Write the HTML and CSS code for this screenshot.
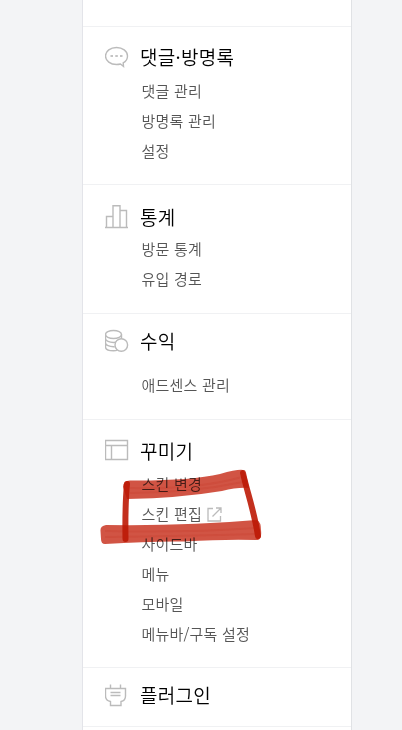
FILE: index.html
```
<!DOCTYPE html>
<html lang="ko">
<head>
    <meta charset="UTF-8">
    <meta name="viewport" content="width=device-width, initial-scale=1.0">
    <title>블로그 관리</title>
    <link rel="stylesheet" href="styles.css">
</head>
<body>
    <nav class="sidebar">
        <div class="menu-top"></div>

        <!-- Comments -->
        <section class="menu menu-comment">
            <h2>
                <svg class="icon" width="24" height="24" viewBox="0 0 24 24">
                    <path d="M11.500 2.500C5.500 2.500.5 6 .5 11s5 8.500 11 8.500q2.200 0 4-.5l3 2.500-.3-3.700C21 16.500 22.500 14 22.500 11c0-5-5-8.500-11-8.500z"/>
                    <path class="dots" d="M5.500 11h2.500M10.300 11h2.500M15 11h2.500"/>
                </svg>
                <span>댓글·방명록</span>
            </h2>
            <ul>
                <li>댓글 관리</li>
                <li>방명록 관리</li>
                <li>설정</li>
            </ul>
        </section>

        <!-- Statistics -->
        <section class="menu menu-stats">
            <h2>
                <svg class="icon" width="24" height="24" viewBox="0 0 24 24">
                    <path d="M0 22.500h23M1.500 22V11.500H8M8 22V.8h7V22M15 5.500h6.500V22"/>
                </svg>
                <span>통계</span>
            </h2>
            <ul>
                <li>방문 통계</li>
                <li>유입 경로</li>
            </ul>
        </section>

        <!-- Revenue -->
        <section class="menu menu-revenue">
            <h2>
                <svg class="icon" width="24" height="24" viewBox="0 0 24 24">
                    <ellipse cx="8.500" cy="5.500" rx="8" ry="4"/>
                    <path d="M.5 5.500v12.500c0 2.500 4 3.800 8 3.800 1.500 0 3-.2 4-.6M16.500 5.500v4M.5 9.500c0 2.500 4 4 8 4 4.500 0 8-1.500 8-4M.5 13.800c0 2.500 4 4 8 4h1.200"/>
                    <circle cx="16.300" cy="16" r="6.300"/>
                </svg>
                <span>수익</span>
            </h2>
            <ul>
                <li>애드센스 관리</li>
            </ul>
        </section>

        <!-- Design -->
        <section class="menu menu-design">
            <h2>
                <svg class="icon" width="24" height="24" viewBox="0 0 24 24">
                    <path d="M.5 1.500h22v19H.5zM.5 6.500h22M6.500 6.500v14"/>
                </svg>
                <span>꾸미기</span>
            </h2>
            <ul>
                <li>스킨 변경</li>
                <li>스킨 편집
                    <svg class="icon-link" width="15" height="15" viewBox="0 0 15 15">
                        <path d="M6 1.500H1v12.500h12.500V9M9 1h5v5M14 1L5.500 9.500"/>
                    </svg>
                </li>
                <li>사이드바</li>
                <li>메뉴</li>
                <li>모바일</li>
                <li>메뉴바/구독 설정</li>
            </ul>

            <!-- Red marker around the skin editor item -->
            <svg class="marker" width="170" height="80" viewBox="98 466 170 80">
                <path class="band" d="M123 487Q123 481 130 480.500Q190 481 220 474Q238 469 243 470Q246 472 249 488Q238 487 222 491Q180 498 127 499z"/>
                <path class="band" d="M100.500 531Q100 526 106 525Q190 526 257 520Q261 522 261 530Q262 539 258 540Q225 539 185 541.500Q150 541 105 544Q101 544 101 539z"/>
                <path class="streak" d="M130 488Q195 490 242 477M130 493Q190 493 243 482M105 531Q185 533 257 528M105 537Q185 536 257 534"/>
                <path class="side" d="M127 484Q125 505 125.500 539M243 473C247 492 254 510 258 536"/>
            </svg>
        </section>

        <!-- Plugins -->
        <section class="menu menu-plugin">
            <h2>
                <svg class="icon" width="24" height="24" viewBox="0 0 24 24">
                    <path d="M5.500 1.500v4M15.500 1.500v4M.5 5.500h20v7.500c0 3-2 5-4.500 5.500v4H5.500v-4C2.500 18 .5 16 .5 13zM5.500 9.500h10M5.500 12.500h10"/>
                </svg>
                <span>플러그인</span>
            </h2>
        </section>
    </nav>
</body>
</html>
```

FILE: styles.css
```
* {
    margin: 0;
    padding: 0;
    box-sizing: border-box;
}

body {
    height: 730px;
    overflow: hidden;
    background-color: #f3f4f6;
    font-family: "Noto Sans CJK KR", sans-serif;
}

/* Sidebar */
.sidebar {
    width: 270px;
    height: 730px;
    margin-left: 82px;
    background-color: #fff;
    border-left: 1px solid #e3e4e9;
    border-right: 1px solid #e0e2e5;
}

.menu-top {
    height: 27px;
    border-bottom: 1px solid #f0f1f3;
}

.menu {
    position: relative;
    padding-left: 22px;
    border-bottom: 1px solid #f0f1f3;
}

.menu h2 {
    display: flex;
    align-items: center;
    gap: 11px;
    height: 30px;
    font-size: 19px;
    font-weight: 350;
    line-height: 30px;
    letter-spacing: 0.3px;
    color: #000;
}

.menu ul {
    list-style: none;
    padding-left: 36.5px;
}

.menu li {
    height: 30px;
    font-size: 15px;
    font-weight: 350;
    line-height: 30px;
    letter-spacing: 0.2px;
    color: #555;
}

.menu-comment {
    height: 158px;
    padding-top: 15px;
}

.menu-comment ul {
    padding-top: 4px;
}

.menu-stats {
    height: 129px;
    padding-top: 17px;
}

.menu-stats ul {
    padding-top: 2px;
}

.menu-revenue {
    height: 106px;
    padding-top: 12px;
}

.menu-revenue ul {
    padding-top: 14px;
}

.menu-design {
    height: 248px;
    padding-top: 16px;
}

.menu-design ul {
    padding-top: 3px;
}

.menu-plugin {
    height: 59px;
    padding-top: 12px;
}

/* Icons */
.icon {
    flex: none;
    fill: none;
    stroke: #bbb;
    stroke-width: 1.4;
}

.icon circle {
    fill: #fff;
}

.icon .dots {
    stroke-width: 2.2;
    stroke: #c4c4c4;
}

.icon-link {
    margin-left: 1px;
    vertical-align: -2px;
    fill: none;
    stroke: #bbb;
    stroke-width: 1.3;
}

/* Marker drawing */
.marker {
    position: absolute;
    left: 15px;
    top: 46px;
    mix-blend-mode: multiply;
}

.band {
    fill: #c42410;
    fill-opacity: 0.78;
}

.streak {
    fill: none;
    stroke: #b41808;
    stroke-opacity: 0.12;
    stroke-width: 2;
}

.side {
    fill: none;
    stroke: #bc1a05;
    stroke-opacity: 0.9;
    stroke-width: 6;
    stroke-linecap: round;
}
```
